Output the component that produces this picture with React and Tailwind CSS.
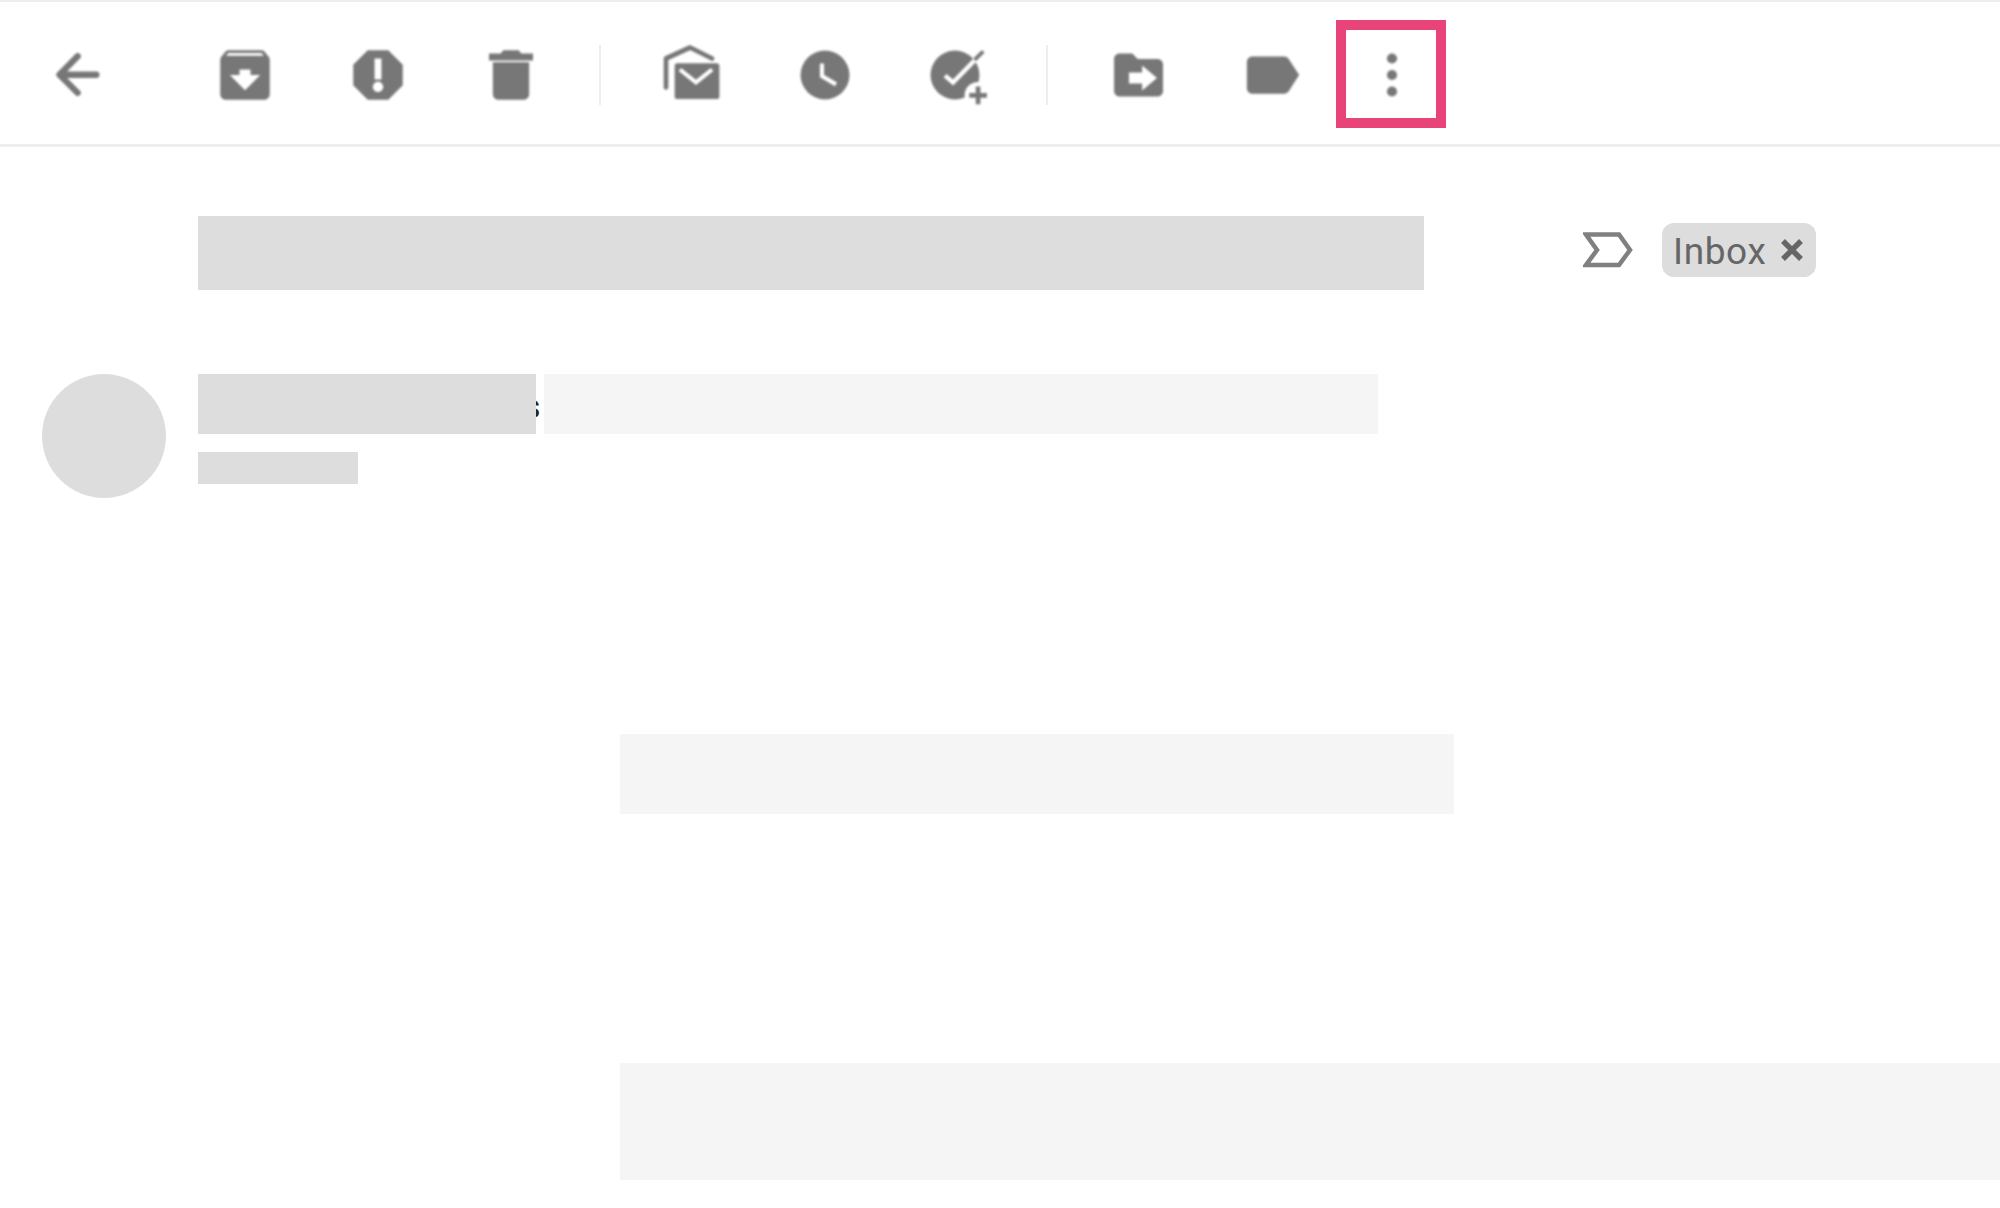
import React from 'react';

const ToolIcon = ({ children, className = '' }) => (
  <svg viewBox="0 0 24 24" fill="#777" className={`w-[66px] h-[66px] shrink-0 blur-[0.8px] ${className}`}>
    {children}
  </svg>
);

const Divider = ({ className = '' }) => (
  <div className={`w-[2px] h-[60px] bg-[#eee] shrink-0 ${className}`} />
);

const Toolbar = () => (
  <header className="h-[147px] border-t-2 border-b-[3px] border-[#eee] flex items-center pl-[43px] pt-[3px]">
    {/* Back */}
    <ToolIcon>
      <path d="M19.4 11.9H6.5M12.6 5.2L6 11.9l6.6 6.6" fill="none" stroke="#777" strokeWidth="2.3" strokeLinecap="round" strokeLinejoin="round" />
    </ToolIcon>

    {/* Archive */}
    <ToolIcon className="ml-[103px]">
      <path d="M20.54 5.23l-1.39-1.68C18.88 3.21 18.47 3 18 3H6c-.47 0-.88.21-1.16.55L3.46 5.23C3.17 5.57 3 6.02 3 6.5V19c0 1.1.9 2 2 2h14c1.1 0 2-.9 2-2V6.5c0-.48-.17-.93-.46-1.27zM12 17.5L6.5 12H10v-2h4v2h3.5L12 17.5zM5.12 5l.81-1h12l.94 1H5.12z" />
    </ToolIcon>
    {/* Report spam */}
    <ToolIcon className="ml-[67px]">
      <path
        fillRule="evenodd"
        d="M15.73 3H8.27L3 8.27v7.46L8.27 21h7.46L21 15.73V8.27L15.73 3zM10.75 6h2.5v7.6h-2.5zM12 14.4a1.9 1.9 0 1 1 0 3.8 1.9 1.9 0 0 1 0-3.8z"
      />
    </ToolIcon>
    {/* Delete */}
    <ToolIcon className="ml-[67px]">
      <path d="M5.4 7.4h13.2V19c0 1.1-.9 2-2 2H7.4c-1.1 0-2-.9-2-2zM4 4.2h4.3L9.2 3h5.6l.9 1.2H20v2.5H4z" />
    </ToolIcon>

    <Divider className="ml-[55px]" />

    {/* Mark as unread */}
    <ToolIcon className="ml-[58px]">
      <path d="M2.55 16.5V6L11.3 2l8 4" fill="none" stroke="#777" strokeWidth="1.7" strokeLinecap="round" strokeLinejoin="round" />
      <rect x="5.45" y="7.45" width="16.75" height="13.55" rx="1.2" stroke="#fff" strokeWidth="0.5" />
      <path d="M7.6 10l5.85 4.7L19.3 10" fill="none" stroke="#fff" strokeWidth="1.5" />
    </ToolIcon>
    {/* Snooze */}
    <ToolIcon className="ml-[67px]">
      <circle cx="12" cy="12" r="8.9" />
      <path d="M10.9 7.8v4.6l5.1 3" fill="none" stroke="#fff" strokeWidth="1.5" />
    </ToolIcon>
    {/* Add to tasks */}
    <ToolIcon className="ml-[67px]">
      <circle cx="10.9" cy="12" r="8.9" />
      <path d="M7.3 12.2l2.9 2.5L21.5 3.1" fill="none" stroke="#fff" strokeWidth="1.6" />
      <path d="M18.4 6.1l2.4-2.3" fill="none" stroke="#777" strokeWidth="1.4" strokeLinecap="round" />
      <circle cx="19.3" cy="19.4" r="4.9" fill="#fff" />
      <path d="M19.3 16.2v6.4M16.1 19.4h6.4" fill="none" stroke="#777" strokeWidth="1.7" />
    </ToolIcon>

    <Divider className="ml-[55px]" />

    {/* Move to */}
    <ToolIcon className="ml-[57px]">
      <path
        fillRule="evenodd"
        d="M5.3 4.2h4.6l2 2h7.2c1.1 0 2 .9 2 2v9.6c0 1.1-.9 2-2 2H5.3c-1.1 0-2-.9-2-2V6.2c0-1.1.9-2 2-2zM8.7 11.1v4h4.8v2.5l5.4-4.5-5.4-4.6v2.6z"
      />
    </ToolIcon>
    {/* Labels */}
    <ToolIcon className="ml-[69px]">
      <path d="M4.5 5.3H16c.7 0 1.3.3 1.7.9L21.5 12l-3.8 5.9c-.4.6-1 .9-1.7.9H4.5c-1.1 0-2-.9-2-2V7.3c0-1.1.9-2 2-2z" />
    </ToolIcon>

    {/* More, highlighted */}
    <div className="ml-[30px] -mt-[2px] w-[110px] h-[108px] border-[10px] border-[#e84479] flex items-center justify-center shrink-0">
      <ToolIcon className="ml-[2px] mt-[2px]">
        <circle cx="12" cy="6" r="1.85" />
        <circle cx="12" cy="12" r="1.85" />
        <circle cx="12" cy="18" r="1.85" />
      </ToolIcon>
    </div>
  </header>
);

const SubjectRow = () => (
  <div className="flex items-start pl-[198px] pt-[69px]">
    <div className="w-[1226px] h-[74px] bg-[#ddd]" />
    <svg viewBox="0 0 50 36" fill="none" className="w-[50px] h-[36px] ml-[159px] mt-[16px] blur-[0.6px]">
      <path d="M3 2.5H36L47 18 36 33H3L14 18Z" stroke="#808080" strokeWidth="4.5" />
    </svg>
    <div className="ml-[29px] mt-[7px] w-[154px] h-[54px] rounded-[12px] bg-[#ddd] flex items-center pl-[11px]">
      <span className="font-[Roboto,sans-serif] text-[37px] leading-none tracking-[0.6px] mt-[3px] text-[#666]">Inbox</span>
      <svg viewBox="0 0 24 24" className="w-[24px] h-[24px] ml-[14px]">
        <path d="M3 3l18 18M21 3L3 21" stroke="#666" strokeWidth="5.5" />
      </svg>
    </div>
  </div>
);

const SenderRow = () => (
  <div className="flex pl-[42px] mt-[84px]">
    <div className="w-[124px] h-[124px] rounded-full bg-[#ddd]" />
    <div className="ml-[32px]">
      <div className="flex">
        <div className="relative w-[338px] h-[60px] bg-[#ddd]" />
        {/* last letter of the name sticks out from under the mask */}
        <span className="font-[Roboto,sans-serif] text-[34px] leading-[60px] h-[58px] mt-[2px] -ml-[13px] mr-[3px] text-[#222] shrink-0">s</span>
        <div className="w-[834px] h-[60px] bg-[#f5f5f5]" />
      </div>
      <div className="w-[160px] h-[32px] mt-[18px] bg-[#ddd]" />
    </div>
  </div>
);

export default function App() {
  return (
    <div className="w-full h-[1208px] bg-white overflow-hidden">
      <Toolbar />
      <SubjectRow />
      <SenderRow />
      <div className="pl-[620px] mt-[236px]">
        <div className="w-[834px] h-[80px] bg-[#f5f5f5]" />
        <div className="h-[117px] mt-[249px] bg-[#f5f5f5]" />
      </div>
    </div>
  );
}
